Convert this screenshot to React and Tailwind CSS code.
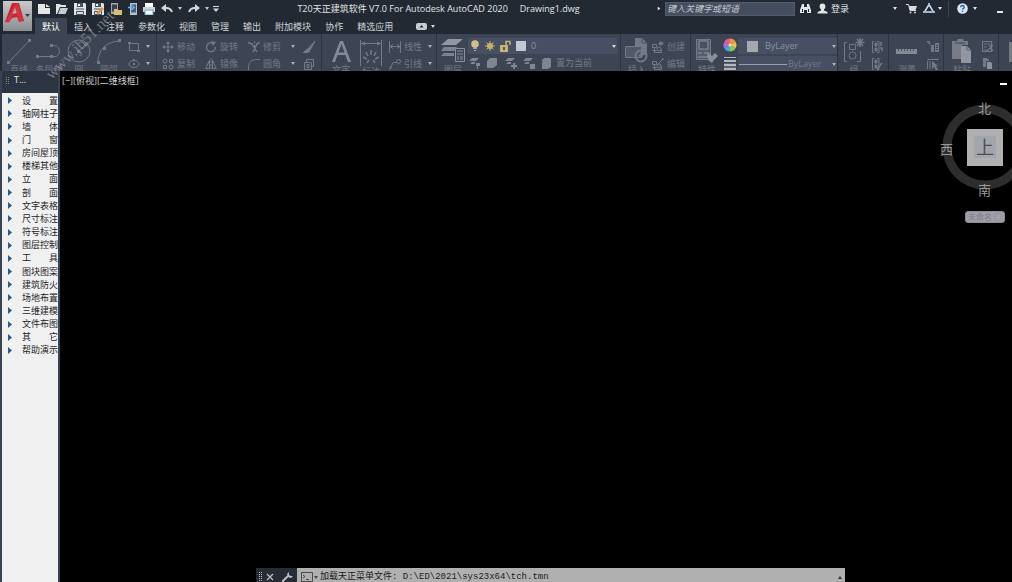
import React from "react";

const Icon = ({ w = 12, h = 12, children, className = "" }) => (
  <svg
    width={w}
    height={h}
    viewBox={`0 0 ${w} ${h}`}
    fill="none"
    stroke="currentColor"
    strokeWidth="1"
    aria-hidden="true"
    className={`shrink-0 ${className}`}
  >
    {children}
  </svg>
);

const Caret = ({ className = "" }) => (
  <svg width="4" height="3" viewBox="0 0 4 3" fill="currentColor" aria-hidden="true" className={`shrink-0 ${className}`}>
    <path d="M0 0h4L2 3z" />
  </svg>
);

/* ---------- quick access icons ---------- */

const NewIcon = () => (
  <Icon className="text-[#e4e6e8]">
    <path d="M0 1h7v4h5v6H0z" fill="currentColor" stroke="none" />
    <path d="M8 1l4 3H8z" fill="currentColor" stroke="none" />
  </Icon>
);

const OpenIcon = () => (
  <Icon className="text-[#e0e2e4]">
    <path d="M0 1h4l1 1h5v2H4l-3 7H0z" fill="currentColor" stroke="none" />
    <path d="M4.500 5H12l-2.500 6H2z" fill="#c9cdd1" stroke="none" />
  </Icon>
);

const SaveIcon = ({ pencil }) => (
  <Icon className="text-[#dfe1e3]">
    <path d="M0 0h11l1 1v11H0z" fill="currentColor" stroke="none" />
    <path d="M3 0h6v4H3z" fill="#4a525e" stroke="none" />
    <path d="M4 1h2v2H4z" fill="#fff" stroke="none" />
    <path d="M2 6h8M2.500 8.500h7v3h-7z" stroke="#4a525e" />
    {pencil && <path d="M5 11l6-6" stroke="#d9914f" strokeWidth="2.500" />}
  </Icon>
);

const WebOpenIcon = () => (
  <Icon>
    <path d="M1 0h7v11H1z" fill="#9ea6b0" stroke="none" />
    <path d="M2 1.500h5v7H2z" fill="#38404c" stroke="none" />
    <path d="M4 6h3l1 1h4v5H4z" fill="#d9bd72" stroke="none" />
  </Icon>
);

const WebSaveIcon = () => (
  <Icon w={9}>
    <path d="M2 0h7v12H2z" fill="#b9c0c8" stroke="none" />
    <path d="M3 1.500h5v8H3z" fill="#3e5f80" stroke="none" />
    <path d="M0 4.500h4M3 2l3 2.500L3 7" stroke="#72b8ea" strokeWidth="1.500" />
  </Icon>
);

const PrintIcon = () => (
  <Icon>
    <path d="M2 0h8v4H2z" fill="#fff" stroke="none" />
    <path d="M0 4h12v5H0z" fill="#cfd4d9" stroke="none" />
    <path d="M2 7h8v5H2z" fill="#f4f6f8" stroke="#6ea5cf" />
  </Icon>
);

const UndoIcon = ({ redo }) => (
  <Icon className={redo ? "-scale-x-100 text-[#d4d8dc]" : "text-[#d4d8dc]"}>
    <path d="M0 5l5-4v8z" fill="currentColor" stroke="none" />
    <path d="M4 5c4-.5 6 1 7 4" strokeWidth="2" />
  </Icon>
);

const CustomizeIcon = () => (
  <Icon w={8} h={8} className="text-[#d4d8dc]">
    <path d="M1 1.500h6" />
    <path d="M1 3.500h6l-3 3.500z" fill="currentColor" stroke="none" />
  </Icon>
);

/* ---------- title bar right icons ---------- */

const Binoculars = () => (
  <Icon w={11} h={11} className="text-[#e2e5e8]">
    <path d="M2 1h2v3h3V1h2l2 6v3H7V7H4v3H0V7z" fill="currentColor" stroke="none" />
    <path d="M2.500 6v3M8.500 6v3" stroke="#222933" />
  </Icon>
);

const UserIcon = () => (
  <Icon w={11} h={11} className="text-[#e2e5e8]">
    <circle cx="5.500" cy="3.500" r="2.900" fill="currentColor" stroke="none" />
    <path d="M4 5h3v2.500l3.500 1.500v1.500H.5V9L4 7.500z" fill="currentColor" stroke="none" />
  </Icon>
);

const CartIcon = () => (
  <Icon w={11} h={11} className="text-[#d7dade]">
    <path d="M0 1.500h2.500L4 7.500h6" />
    <path d="M3 3h8l-1.500 4H4z" fill="currentColor" stroke="none" />
    <circle cx="4.500" cy="9.500" r="1" fill="currentColor" stroke="none" />
    <circle cx="9" cy="9.500" r="1" fill="currentColor" stroke="none" />
  </Icon>
);

const AutodeskIcon = () => (
  <Icon w={12} h={11} className="text-[#d6e0f2]">
    <path d="M6 1.500L1.500 9h9z" strokeWidth="1.500" />
    <path d="M0 8h3v2H0zM9 8h3v2H9zM5 0h2v2H5z" fill="#9db6e2" stroke="none" />
  </Icon>
);

const HelpIcon = () => (
  <Icon w={11} h={11}>
    <circle cx="5.500" cy="5.500" r="5.300" fill="#dde7f3" stroke="none" />
    <path d="M3.700 4.200c0-2.200 3.600-2.200 3.600 0 0 1.200-1.800 1.200-1.800 2.600M5.500 7.800v1.300" stroke="#2f5f9c" strokeWidth="1.400" />
  </Icon>
);

/* ---------- ribbon icons ---------- */

const LineIcon = () => (
  <Icon w={24} h={26}>
    <path d="M2 24L22 3" />
    <path d="M0 23h3v3H0zM21 1h3v3h-3z" fill="currentColor" stroke="none" />
  </Icon>
);

const PolylineIcon = () => (
  <Icon w={26} h={26}>
    <path d="M2 18.500h17c6 0 6-11-1-11h-2" />
    <path d="M0 17h3v3H0zM14 6h3v3h-3zM14 17h3v3h-3z" fill="currentColor" stroke="none" />
  </Icon>
);

const CircleIcon = () => (
  <Icon w={26} h={26}>
    <circle cx="13" cy="13" r="11" />
    <path d="M13 13l7-7" />
    <path d="M11 12h3v3h-3zM19 5h3v3h-3z" fill="currentColor" stroke="none" />
  </Icon>
);

const ArcIcon = () => (
  <Icon w={26} h={26}>
    <path d="M2 24C2 12 10 4 23 3" />
    <path d="M1 23h3v3H1zM7 9h3v3H7zM22 1h3v3h-3z" fill="currentColor" stroke="none" />
  </Icon>
);

const RectIcon = () => (
  <Icon>
    <path d="M1.500 2.500h9v7h-9z" />
    <path d="M0 1h3v2H0zM9 9h3v2H9z" fill="currentColor" stroke="none" />
  </Icon>
);

const EllipseIcon = () => (
  <Icon>
    <ellipse cx="6" cy="6" rx="5" ry="3.500" />
    <path d="M5 5h2v2H5zM5 1h2v2H5z" fill="currentColor" stroke="none" />
  </Icon>
);

const MoveIcon = () => (
  <Icon>
    <path d="M6 2v8M2 6h8" />
    <path d="M6 0l2 3H4zM6 12l2-3H4zM0 6l3-2v4zM12 6L9 4v4z" fill="currentColor" stroke="none" />
  </Icon>
);

const CopyIcon = () => (
  <Icon>
    <circle cx="3" cy="3" r="2" />
    <circle cx="9" cy="9" r="2" />
    <path d="M7.500 1.500h3v3h-3zM1.500 7.500h3v3h-3z" />
  </Icon>
);

const RotateIcon = () => (
  <Icon>
    <path d="M8 2.200A4.500 4.500 0 1 0 10.500 6" strokeWidth="1.300" />
    <path d="M6 0l5 1-3 4z" fill="currentColor" stroke="none" />
  </Icon>
);

const MirrorIcon = () => (
  <Icon>
    <path d="M4.500 2v8.500H.8zM7.500 2v8.500h3.700z" />
    <path d="M6 0v12" strokeDasharray="2 1" />
  </Icon>
);

const TrimIcon = () => (
  <Icon>
    <path d="M0 1.500l5 2M12 1.500l-4 2" strokeWidth="1.500" />
    <path d="M4 3l5 8M9 3l-4 8" strokeWidth="1.300" />
    <path d="M6.500 0v12" strokeDasharray="2 2" />
  </Icon>
);

const FilletIcon = () => (
  <Icon>
    <path d="M.5 12V9C.5 4 4 1.500 9 1.500h3" />
  </Icon>
);

const EraseIcon = () => (
  <Icon>
    <path d="M12 0L5 8l2 1zM4 8l3 2-3 2H0z" fill="currentColor" />
  </Icon>
);

const ExplodeIcon = () => (
  <Icon>
    <path d="M1.500 4.500h7v7h-7zM3.500 4V1.500h7v7H9M4 6.500h2v3H4z" />
  </Icon>
);

const TextIcon = () => (
  <Icon w={22} h={26} className="text-[#858b96]">
    <path
      d="M2 24L10 3h3l8 21h-3l-2.500-7h-8L5 24zM8.400 14.500h6.200L11.500 6z"
      fill="currentColor"
      fillRule="evenodd"
      stroke="none"
    />
  </Icon>
);

const DimensionIcon = () => (
  <Icon w={24} h={28}>
    <path d="M1.500 2v26M22.500 2v26M2 5.500h20" />
    <path d="M2 5.500l4-2v4zM22 5.500l-4-2v4z" fill="currentColor" stroke="none" />
    <path d="M12 12v5M7 14l2 4M17 14l-2 4M4 19l4 2M20 19l-4 2M8 25l2-3M16 25l-2-3" strokeWidth="1.500" />
  </Icon>
);

const LinearIcon = () => (
  <Icon>
    <path d="M.5 0v12M11.500 0v12M1 5.500h10M4 3.500l-3 2 3 2M8 3.500l3 2-3 2" />
  </Icon>
);

const LeaderIcon = () => (
  <Icon>
    <path d="M1 11L4 4.500h4" />
    <circle cx="9.500" cy="3.500" r="2" />
    <path d="M0 12l1-4 2 2z" fill="currentColor" stroke="none" />
  </Icon>
);

const LayersIcon = () => (
  <Icon w={24} h={26}>
    <path d="M7 1h15l-7 6H0z" fill="#9297a0" stroke="none" />
    <path d="M3 9h13l-3 4H0zM3 15h10v3H0z" fill="#7d838e" stroke="none" />
    <path d="M14.500 10.500h9v13h-9z" fill="#3d4554" stroke="#8b909a" />
    <path d="M16 13h6M16 16h6M16 19h2M19 19h3M16 21h2M19 21h3" stroke="#8b909a" />
  </Icon>
);

const LayerOpIcon = ({ mark }) => (
  <Icon className="text-[#80868f]">
    <path d="M3 1h7L7 4H0zM3 5h3v2H1z" fill="currentColor" stroke="none" />
    <path d={mark} fill="currentColor" stroke="none" />
  </Icon>
);

const InsertIcon = () => (
  <Icon w={24} h={26}>
    <path d="M10 0h7l5 5v12H10z" fill="#747986" stroke="none" />
    <path d="M17 0v5h5" stroke="#4a515f" />
    <path d="M.5 8.500h16v11H.5z" fill="#525966" />
    <circle cx="16" cy="18" r="5.500" strokeWidth="2" />
    <path d="M16 14v5M14 17l2 2 2-2" strokeWidth="1.500" />
  </Icon>
);

const BlockIcon = ({ edit }) => (
  <Icon>
    <path d="M.5 3.500h4v3h-4zM2.500 6.500v5h7v-3M.5 9.500h4" />
    <circle cx="7" cy="8" r="2" />
    <path d={edit ? "M6 6l5-5M10 0l2 2" : "M9 0v5M6.500 2.500h5M7 1l4 3M11 1L7 4"} />
  </Icon>
);

const MatchIcon = () => (
  <Icon w={24} h={26}>
    <path d="M1.500 1.500h14v20h-14z" fill="#565d6a" />
    <path d="M4 3h9v8H4z" fill="#4a515f" stroke="#8b909a" />
    <path d="M3 14h4v2H3zM9 14h4v2H9zM3 18h10v2H3z" fill="currentColor" stroke="none" />
    <path d="M13 14l4 4 3-3 3 3-4 4-2 3-3-2-2-5z" fill="#8b8f98" stroke="none" />
  </Icon>
);

const ColorWheel = () => (
  <Icon w={14} h={14}>
    <g stroke="none">
      <path d="M7 7V.500A6.500 6.500 0 0 1 12.600 3.700z" fill="#ee9440" />
      <path d="M7 7l5.600-3.300a6.500 6.500 0 0 1 0 6.600z" fill="#ecc24a" />
      <path d="M7 7l5.600 3.300A6.500 6.500 0 0 1 7 13.500z" fill="#86c95c" />
      <path d="M7 7v6.500a6.500 6.500 0 0 1-5.600-3.200z" fill="#46a9d4" />
      <path d="M7 7l-5.600 3.300a6.500 6.500 0 0 1 0-6.600z" fill="#a173dc" />
      <path d="M7 7L1.400 3.700A6.500 6.500 0 0 1 7 .500z" fill="#e8607c" />
      <circle cx="7" cy="7" r="1.500" fill="#e8e2da" />
    </g>
  </Icon>
);

const LineweightIcon = () => (
  <Icon w={12} h={14} className="text-[#b4b8be]">
    <path d="M0 1.500h12" />
    <path d="M0 5h12" strokeWidth="2" />
    <path d="M0 9h12M0 13h12" strokeWidth="2.500" />
  </Icon>
);

const GroupIcon = () => (
  <Icon w={22} h={26}>
    <path d="M4 4.500H1.500v19H4M14 23.500h3.500V13" />
    <path d="M6.500 6.500h6v5h-6z" />
    <circle cx="9.500" cy="17.500" r="3.500" />
    <path d="M17 0v9M12.500 4.500h9M14 1l6 7M20 1l-6 7" strokeWidth="1.500" />
  </Icon>
);

const UngroupIcon = ({ edit }) => (
  <Icon>
    <path d="M3 .5H1.500v11H3M6 .5h2v11H6" />
    <path d="M4 2h2v3H4zM4 7h2v3H4z" fill="currentColor" />
    <path d={edit ? "M6 11l5-6" : "M10 1v4M9 7h2v3"} strokeWidth="1.500" />
  </Icon>
);

const RulerIcon = () => (
  <Icon w={22} h={26}>
    <path d="M0 11h21v5H0z" fill="#858993" stroke="none" />
    <path d="M2.500 11v2M5.500 11v2M8.500 11v2M11.500 11v2M14.500 11v2M17.500 11v2" stroke="#4a515f" />
  </Icon>
);

const SelectIcon = ({ cursor }) => (
  <Icon>
    <path d={cursor ? "M.5 1.500h11M.5 3v8M3 3v8" : "M0 0l3 1-1 2zM2 2l3 3"} />
    <path d={cursor ? "M5 3l6 5H9l2 4H9L7 9l-2 2z" : "M4 4h3v7H4zM8 2h4v9H8z"} fill="currentColor" stroke="none" />
    {!cursor && <path d="M9 4.500h2M9 6.500h2M9 8.500h2" stroke="#3d4554" />}
  </Icon>
);

const PasteIcon = () => (
  <Icon w={20} h={26}>
    <path d="M0 3h5l1-2h5l1 2h4v4h-6v14H0z" fill="#777b85" stroke="none" />
    <path d="M3 5h10" stroke="#3d4554" />
    <path d="M9 8h6l4 4v13H9z" fill="#9396a0" stroke="none" />
    <path d="M15 8v4h4" stroke="#555c69" />
  </Icon>
);

const CutIcon = () => (
  <Icon>
    <path d="M.5.5h9v10h-9zM2 3h3M2 6h3M2 9h3M6 2l5 8M11 4l-6 6" strokeWidth="1.200" />
  </Icon>
);

const CopyClipIcon = () => (
  <Icon>
    <path d="M1 0h4l2 2v7H1z" fill="currentColor" stroke="none" />
    <path d="M4.500 3.500h4l2 2v6h-6z" fill="#8d919a" stroke="#3d4554" />
  </Icon>
);

/* ---------- ribbon building blocks ---------- */

const Panel = ({ name, children, className = "" }) => (
  <section
    aria-label={name}
    className={`flex shrink-0 h-[37px] overflow-hidden pt-1 border-r border-[#2c3442] ${className}`}
  >
    {children}
  </section>
);

const BigTool = ({ icon, label, className = "w-[30px]" }) => (
  <button className={`flex shrink-0 flex-col items-center ${className}`}>
    <span className="flex h-7 items-start">{icon}</span>
    <span className="leading-3 whitespace-nowrap">{label}</span>
  </button>
);

const Tool = ({ icon, label, menu, name }) => (
  <button aria-label={label ? undefined : name} className="flex h-[17px] items-center gap-[3px] whitespace-nowrap">
    {icon}
    {label && <span>{label}</span>}
    {menu && <Caret className="ml-auto text-[#aab0b8]" />}
  </button>
);

const quickAccess = [
  { name: "新建", icon: <NewIcon /> },
  { name: "打开", icon: <OpenIcon /> },
  { name: "保存", icon: <SaveIcon /> },
  { name: "另存为", icon: <SaveIcon pencil /> },
  { name: "从 Web 打开", icon: <WebOpenIcon /> },
  { name: "保存到 Web", icon: <WebSaveIcon /> },
  { name: "打印", icon: <PrintIcon /> },
];

const tabs = ["默认", "插入", "注释", "参数化", "视图", "管理", "输出", "附加模块", "协作", "精选应用"];

const menuItems = [
  "设　　置",
  "轴网柱子",
  "墙　　体",
  "门　　窗",
  "房间屋顶",
  "楼梯其他",
  "立　　面",
  "剖　　面",
  "文字表格",
  "尺寸标注",
  "符号标注",
  "图层控制",
  "工　　具",
  "图块图案",
  "建筑防火",
  "场地布置",
  "三维建模",
  "文件布图",
  "其　　它",
  "帮助演示",
];

const layerMarks = [
  "M7 6h4v3H9v3H8V9H7z",
  "M0 4h6l4-3v7l-4 3H0z",
  "M8 6h2v2h2v2h-2v2H8v-2H6V8h2z",
  "M7 7h5v5H7z",
  "M1 5l4-3h5v8l-3 2H1z",
];

const TitleBar = () => (
  <div className="flex h-[18px] items-center pb-px">
    <div className="flex items-center gap-[6px] pl-[6px]">
      {quickAccess.map((item) => (
        <button key={item.name} aria-label={item.name}>
          {item.icon}
        </button>
      ))}
      <button aria-label="放弃" className="flex items-center gap-[5px]">
        <UndoIcon />
        <Caret className="text-[#c5c9cf]" />
      </button>
      <button aria-label="重做" className="flex items-center gap-[5px]">
        <UndoIcon redo />
        <Caret className="text-[#c5c9cf]" />
      </button>
      <button aria-label="自定义快速访问工具栏" className="-ml-[3px]">
        <CustomizeIcon />
      </button>
    </div>
    <h1 className="flex flex-1 justify-center gap-3 whitespace-nowrap text-[9px] text-[#e3e6e9]">
      <span>T20天正建筑软件 V7.0 For Autodesk AutoCAD 2020</span>
      <span>Drawing1.dwg</span>
    </h1>
    <div className="flex items-center text-[#e3e6e9]">
      <Caret className="-rotate-90" />
      <input
        aria-label="搜索"
        placeholder="键入关键字或短语"
        className="ml-1 h-[14px] w-[130px] border border-[#525c6c] bg-[#454e5e] px-px text-[9px] italic placeholder:text-[#c6cbd1]"
      />
      <button aria-label="查找" className="ml-[5px]">
        <Binoculars />
      </button>
      <button className="ml-[6px] flex items-center gap-[3px] text-[9px]">
        <UserIcon />
        登录
      </button>
      <Caret className="ml-11" />
      <button aria-label="应用商店" className="ml-[9px]">
        <CartIcon />
      </button>
      <button aria-label="Autodesk" className="ml-[6px] flex items-center gap-[3px]">
        <AutodeskIcon />
        <Caret />
      </button>
      <span className="ml-[6px] h-4 w-px bg-[#3c4553]" />
      <button aria-label="帮助" className="ml-2 flex items-center gap-[5px]">
        <HelpIcon />
        <Caret />
      </button>
      <button aria-label="最小化" className="mr-[9px] ml-5 flex h-4 items-center pt-[7px]">
        <span className="h-[2px] w-[6px] bg-[#e3e6e9]" />
      </button>
    </div>
  </div>
);

const Tabs = () => (
  <nav className="flex h-4 items-stretch pl-[3px] text-[9px] text-[#d0d4d9]">
    {tabs.map((tab, i) => (
      <button
        key={tab}
        className={`px-[7px] pt-px whitespace-nowrap ${i === 0 ? "bg-[#3d4554] text-white" : ""}`}
      >
        {tab}
      </button>
    ))}
    <button aria-label="功能区显示" className="ml-4 flex items-center gap-1">
      <Icon w={11} h={7} className="text-[#c8ccd1]">
        <rect width="11" height="7" rx="2" fill="currentColor" stroke="none" />
        <path d="M3.500 4.500h4L5.500 2z" fill="#222933" stroke="none" />
      </Icon>
      <Caret />
    </button>
  </nav>
);

const Ribbon = () => (
  <div className="ml-[2px] flex h-[37px] overflow-hidden bg-[#3d4554] text-[9px] text-[#737a87]">
    <Panel name="绘图" className="w-[155px] pl-[2px]">
      <BigTool icon={<LineIcon />} label="直线" />
      <BigTool icon={<PolylineIcon />} label="多段线" />
      <BigTool icon={<CircleIcon />} label="圆" />
      <BigTool icon={<ArcIcon />} label="圆弧" />
      <div className="grid w-[26px] auto-rows-min pl-1">
        <Tool name="矩形" icon={<RectIcon />} menu />
        <Tool name="椭圆" icon={<EllipseIcon />} menu />
      </div>
    </Panel>

    <Panel name="修改" className="w-[165px] pl-[5px]">
      <div className="grid auto-rows-min grid-cols-[43px_43px_47px_auto] gap-x-0">
        <Tool icon={<MoveIcon />} label="移动" />
        <Tool icon={<RotateIcon />} label="旋转" />
        <Tool icon={<TrimIcon />} label="修剪" menu />
        <span className="pl-2">
          <Tool name="删除" icon={<EraseIcon />} />
        </span>
        <Tool icon={<CopyIcon />} label="复制" />
        <Tool icon={<MirrorIcon />} label="镜像" />
        <Tool icon={<FilletIcon />} label="圆角" menu />
        <span className="pl-2">
          <Tool name="分解" icon={<ExplodeIcon />} />
        </span>
      </div>
    </Panel>

    <Panel name="注释" className="w-[115px] pl-1">
      <BigTool icon={<TextIcon />} label="文字" />
      <BigTool icon={<DimensionIcon />} label="标注" />
      <div className="grid w-[46px] auto-rows-min pl-[3px]">
        <Tool icon={<LinearIcon />} label="线性" menu />
        <Tool icon={<LeaderIcon />} label="引线" menu />
      </div>
    </Panel>

    <Panel name="图层" className="w-[184px] pl-px">
      <BigTool icon={<LayersIcon />} label="图层" />
      <div className="flex w-[149px] flex-col">
        <button className="flex h-4 shrink-0 items-center gap-1 bg-[#465062] pr-px pl-[2px] text-[#8b929d]">
          <Icon w={10} className="text-[#cfc187]">
            <circle cx="5" cy="4" r="3.800" fill="currentColor" stroke="none" />
            <path d="M3 7h4v2H3zM4 10h2v1H4z" fill="#a9a68f" stroke="none" />
          </Icon>
          <Icon className="text-[#c8b06b]">
            <circle cx="6" cy="6" r="3" fill="currentColor" stroke="none" />
            <path d="M6 1v10M1 6h10M2.500 2.500l7 7M9.500 2.500l-7 7" />
          </Icon>
          <Icon w={11} className="text-[#c9b373]">
            <path d="M0 5h8v7H0z" fill="currentColor" stroke="none" />
            <path d="M6 5V1.500h4V5" strokeWidth="1.500" />
            <path d="M3 7h2v3H3z" fill="#5a5a52" stroke="none" />
          </Icon>
          <span className="mx-px size-[10px] bg-[#c3c9d2]" />
          <span>0</span>
          <Caret className="ml-auto text-[#d5d9de]" />
        </button>
        <div className="flex h-[18px] shrink-0 items-center gap-[6px] pl-px">
          {layerMarks.map((mark) => (
            <LayerOpIcon key={mark} mark={mark} />
          ))}
          <button className="-ml-[3px] whitespace-nowrap">置为当前</button>
        </div>
      </div>
    </Panel>

    <Panel name="块" className="w-[70px] pl-px">
      <BigTool icon={<InsertIcon />} label="插入" />
      <div className="grid auto-rows-min">
        <Tool icon={<BlockIcon />} label="创建" />
        <Tool icon={<BlockIcon edit />} label="编辑" />
      </div>
    </Panel>

    <Panel name="特性" className="w-[147px] pl-px">
      <BigTool icon={<MatchIcon />} label="特性" />
      <div className="flex w-4 flex-col items-center gap-1">
        <ColorWheel />
        <LineweightIcon />
      </div>
      <div className="flex w-[99px] flex-col gap-[2px]">
        <button className="flex h-4 shrink-0 items-center bg-[#465062] pr-px pl-[9px] text-[#8b929d]">
          <span className="size-[11px] bg-[#a5a8ac]" />
          <span className="ml-[7px]">ByLayer</span>
          <Caret className="ml-auto text-[#aeb4bc]" />
        </button>
        <button className="flex h-4 shrink-0 items-center bg-[#465062] pr-px pl-px">
          <span className="h-px w-12 bg-[#9ba1aa]" />
          <span className="ml-px">ByLayer</span>
          <Caret className="ml-auto text-[#aeb4bc]" />
        </button>
      </div>
    </Panel>

    <Panel name="组" className="w-[51px] pl-px">
      <BigTool icon={<GroupIcon />} label="组" />
      <div className="grid auto-rows-min pl-[2px]">
        <Tool name="解除编组" icon={<UngroupIcon />} />
        <Tool name="组编辑" icon={<UngroupIcon edit />} />
      </div>
    </Panel>

    <Panel name="实用工具" className="w-[55px] pl-[3px]">
      <BigTool icon={<RulerIcon />} label="测量" />
      <div className="grid auto-rows-min pl-[5px]">
        <Tool name="快速选择" icon={<SelectIcon />} />
        <Tool name="全部选择" icon={<SelectIcon cursor />} />
      </div>
    </Panel>

    <Panel name="剪贴板" className="w-[55px] pl-[3px]">
      <BigTool icon={<PasteIcon />} label="粘贴" />
      <div className="grid auto-rows-min pl-[5px]">
        <Tool name="剪切" icon={<CutIcon />} />
        <Tool name="复制剪裁" icon={<CopyClipIcon />} />
      </div>
    </Panel>

    <div className="flex flex-1 justify-end overflow-hidden pt-2">
      <span className="h-5 w-[3px] bg-[#777c87]" />
    </div>
  </div>
);

const SideMenu = () => (
  <aside className="flex w-[60px] shrink-0 flex-col border-r-2 border-l-2 border-[#3a4353] bg-[#f0f0f1]">
    <div className="flex h-[22px] items-center gap-[5px] bg-[#2c3442] pb-1 pl-1 text-[9px] text-[#e8eaec]">
      <Icon w={3} h={7} className="text-[#7d8593]">
        <path d="M.5 0v7M2.500 0v7" strokeDasharray="1 1" />
      </Icon>
      T...
    </div>
    <ul className="mt-px grid h-[263px] grid-rows-20 overflow-hidden text-[9px] text-[#1d1d1f]">
      {menuItems.map((item) => (
        <li key={item} className="flex min-h-0">
          <button className="flex items-center gap-[10px] pl-[6px] leading-3 whitespace-nowrap">
            <svg width="4" height="7" viewBox="0 0 4 7" className="shrink-0 fill-[#2f5c86]" aria-hidden="true">
              <path d="M0 0l4 3.500L0 7z" />
            </svg>
            {item}
          </button>
        </li>
      ))}
    </ul>
  </aside>
);

const ViewCube = () => (
  <div className="relative mt-[9px] h-[130px] w-[74px] self-end overflow-hidden text-[13px] leading-4 text-[#9a9a9a]">
    <svg width="74" height="110" viewBox="0 0 74 110" fill="none" aria-hidden="true">
      <circle cx="47" cy="51" r="38" stroke="#2d2d2d" strokeWidth="9" />
      <rect x="29" y="33" width="36" height="37" fill="#b0b0b0" />
      <rect x="36" y="40" width="22" height="22" fill="#a3a5ac" />
    </svg>
    <span className="absolute top-1 left-10">北</span>
    <span className="absolute top-[45px] left-[2px]">西</span>
    <span className="absolute top-[86px] left-10">南</span>
    <button className="absolute top-[41px] left-9 w-[22px] text-center text-[18px] leading-5 text-[#4b4f55]">上</button>
    <button className="absolute top-[115px] left-[27px] h-3 w-10 rounded-[3px] border border-[#8b8a93] bg-[#a09fa8] text-[8px] leading-[10px] whitespace-nowrap text-[#7c7b86]">
      未命名 □
    </button>
  </div>
);

const CommandLine = () => (
  <div className="mt-auto mr-[167px] ml-[196px] flex h-[14px] overflow-hidden bg-[#b0b0b0]">
    <div className="flex w-[41px] shrink-0 items-center bg-[#272b34] pt-1 pl-[3px] text-[#b9bdc4]">
      <Icon w={3} h={10}>
        <path d="M.5 0v10M2.500 0v10" strokeDasharray="1 1" />
      </Icon>
      <button aria-label="关闭" className="ml-1">
        <Icon w={8} h={8}>
          <path d="M1 1l6 6M7 1L1 7" strokeWidth="1.300" />
        </Icon>
      </button>
      <button aria-label="自定义" className="ml-2">
        <Icon w={11} h={10}>
          <path d="M0 10l6-6" strokeWidth="2" />
          <path d="M7 0L5 2l1 3 3 1 2-2H9L7 3z" fill="currentColor" stroke="none" />
        </Icon>
      </button>
    </div>
    <label htmlFor="command" className="flex shrink-0 items-center gap-px pt-1 pl-1 text-[#4a4a4a]">
      <Icon w={12} h={10}>
        <path d="M.5.5h11v9H.5zM2 3l2 1.500L2 6M5 7.500h3" />
      </Icon>
      <Caret />
    </label>
    <input
      id="command"
      aria-label="命令行"
      defaultValue="加载天正菜单文件: D:\ED\2021\sys23x64\tch.tmn"
      className="min-w-0 flex-1 bg-transparent pt-[5px] pl-[2px] font-['Liberation_Mono','Noto_Sans_CJK_SC',monospace] text-[9px] text-[#1c1c1c]"
    />
    <button aria-label="历史记录" className="pt-1 pr-[3px] text-[#333]">
      <Caret className="rotate-180" />
    </button>
  </div>
);

export default function App() {
  return (
    <div className="relative flex min-h-screen flex-col overflow-hidden bg-black font-['Open_Sans','Noto_Sans_CJK_SC',sans-serif]">
      <header className="bg-[#222933]">
        <div className="flex">
          <button
            aria-label="应用程序菜单"
            className="mt-px ml-[3px] flex h-[30px] w-[29px] shrink-0 items-center bg-linear-to-b from-[#c9cacc] to-[#8b8d91]"
          >
            <svg width="29" height="30" viewBox="0 0 29 30" aria-hidden="true">
              <path d="M2 21L9 2h7l5 18-5 1-2-5-5 1-3 4z" fill="#c8242f" />
              <path d="M9 13l3-7 2 6z" fill="#b4b5b8" />
              <path d="M2 21l10-17 3-2 5 17-4 2-4-13-6 14z" fill="#e0404a" opacity="0.500" />
              <path d="M22 13h5l-2.500 3z" fill="#33373d" />
            </svg>
          </button>
          <div className="min-w-0 flex-1">
            <TitleBar />
            <Tabs />
          </div>
        </div>
        <Ribbon />
      </header>

      <div className="flex flex-1">
        <SideMenu />
        <main className="flex min-w-0 flex-1 flex-col">
          <div className="flex justify-between pt-1 pr-[5px] pl-[2px] text-[9px] leading-3 text-[#d0d0d0]">
            <span>[−][俯视][二维线框]</span>
            <button aria-label="最小化视口" className="flex h-3 items-center pt-[5px]">
              <span className="h-[2px] w-[7px] bg-white" />
            </button>
          </div>
          <ViewCube />
          <CommandLine />
        </main>
      </div>

      <span className="pointer-events-none absolute top-[37px] left-[35px] -rotate-45 font-['Liberation_Serif',serif] text-[16px] leading-4 text-[#8f949d]/70">
        www.jb51.net
      </span>
    </div>
  );
}
